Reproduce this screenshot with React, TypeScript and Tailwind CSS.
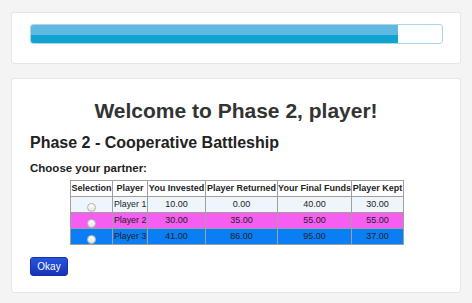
import React from "react";

const rows = [
  { bg: "bg-[#eef6fc]", player: "Player 1", inv: "10.00", ret: "0.00", fin: "40.00", kept: "30.00" },
  { bg: "bg-[#f55ef0]", player: "Player 2", inv: "30.00", ret: "35.00", fin: "55.00", kept: "55.00" },
  { bg: "bg-[#0a7ff5]", player: "Player 3", inv: "41.00", ret: "86.00", fin: "95.00", kept: "37.00" },
];

const th = "border border-[#a0a0a0] px-0 font-bold whitespace-nowrap h-[16px] overflow-visible";
const td = "border border-[#a0a0a0] whitespace-nowrap h-[16px]";

export default function App() {
  return (
    <div
      className="w-[472px] h-[303px] bg-[#f4f4f4] px-[11px] pt-[12px] text-[#333]"
      style={{ fontFamily: '"Liberation Sans", Arial, Helvetica, sans-serif' }}
    >
      <div className="bg-white border border-[#e6e6e6] rounded-[3px] h-[52px] pl-[18px] pr-[18px] pt-[11px]">
        <div className="h-[20px] w-[413px] rounded-[3px] border border-[#a9d6ef] bg-white overflow-hidden flex">
          <div className="w-[367px] h-full flex flex-col">
            <div className="h-[10px] bg-[#5fb9e0]" />
            <div className="flex-1 bg-[#10a3cf]" />
          </div>
        </div>
      </div>
      <div className="mt-[14px] bg-white border border-[#e6e6e6] rounded-[3px] h-[215px] pl-[18px] pt-[20px]">
        <h1 className="text-[21px] leading-[24px] font-bold text-center text-[#333] pr-[18px]">
          Welcome to Phase 2, player!
        </h1>
        <h2 className="mt-[10px] text-[16px] leading-[20px] font-bold text-[#222]">
          Phase 2 - Cooperative Battleship
        </h2>
        <p className="mt-[8px] text-[11.5px] leading-[14px] font-bold text-[#222]">Choose your partner:</p>
        <table className="ml-[40px] mt-[5px] table-fixed w-[333px] border-collapse border border-[#7a7a7a] text-[9px] leading-[11px] text-[#222]">
          <colgroup>
            <col className="w-[42px]" />
            <col className="w-[35px]" />
            <col className="w-[58px]" />
            <col className="w-[72px]" />
            <col className="w-[74px]" />
            <col className="w-[52px]" />
          </colgroup>
          <thead>
            <tr>
              <th className={th}>Selection</th>
              <th className={th}>Player</th>
              <th className={th}>You Invested</th>
              <th className={th}>Player Returned</th>
              <th className={th}>Your Final Funds</th>
              <th className={th}>Player Kept</th>
            </tr>
          </thead>
          <tbody>
            {rows.map((r, i) => (
              <tr key={i} className={r.bg}>
                <td className={`${td} align-bottom p-0`}>
                  <div className="flex justify-center">
                    <span className="block w-[9px] h-[9px] rounded-full border border-[#b0b0b0] bg-[linear-gradient(#ffffff,#e4e4e4)]" />
                  </div>
                </td>
                <td className={`${td} px-[1px] text-[8.8px] text-left overflow-visible`}>{r.player}</td>
                <td className={`${td} text-center`}>{r.inv}</td>
                <td className={`${td} text-center`}>{r.ret}</td>
                <td className={`${td} text-center`}>{r.fin}</td>
                <td className={`${td} text-center`}>{r.kept}</td>
              </tr>
            ))}
          </tbody>
        </table>
        <button className="mt-[12px] w-[38px] h-[19px] rounded-[3px] bg-[linear-gradient(#2456dc,#1832b8)] text-white text-[10px] leading-[17px] border border-[#1a2fa8]">
          Okay
        </button>
      </div>
    </div>
  );
}
